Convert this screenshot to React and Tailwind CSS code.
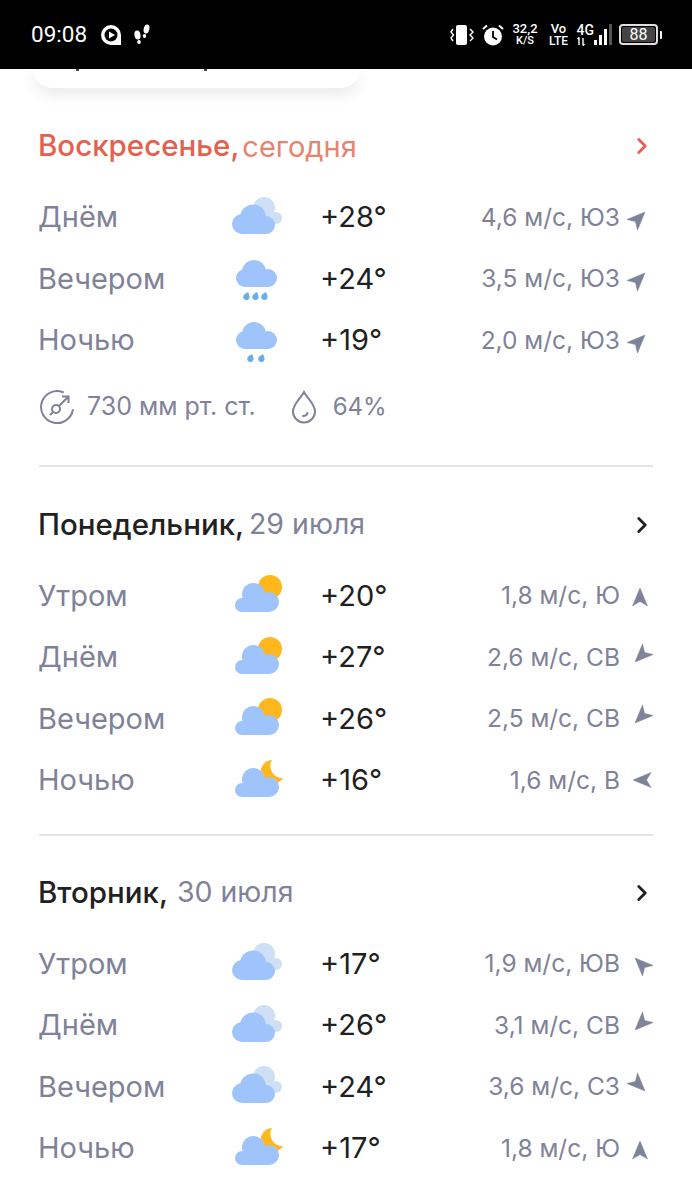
import React from 'react';
import { ChevronRight } from 'lucide-react';

const CLOUD = '#9fc3fb';
const DROP = '#6aaee8';

const PuffyCloud = () => (
  <g fill={CLOUD}>
    <circle cx="13" cy="29" r="10" />
    <circle cx="24" cy="22.5" r="13" />
    <circle cx="37" cy="30" r="9" />
    <rect x="13" y="28" width="24" height="11" />
  </g>
);

const RainCloud = () => (
  <g fill={CLOUD}>
    <circle cx="25" cy="16" r="12" />
    <circle cx="16" cy="22" r="9" />
    <circle cx="39" cy="22" r="9" />
    <rect x="16" y="18" width="23" height="13" />
  </g>
);

const SunCloud = () => (
  <g fill={CLOUD}>
    <circle cx="24.5" cy="21.5" r="11.5" />
    <circle cx="13" cy="32" r="7" />
    <circle cx="40" cy="29" r="10" />
    <rect x="13" y="26" width="27" height="13" />
  </g>
);

const Drop = ({ x, y }) => (
  <path d={`M${x + 2} ${y} C${x + 3} ${y + 3} ${x + 4} ${y + 4} ${x + 3.4} ${y + 6} A3.2 3.2 0 0 1 ${x - 2.8} ${y + 5} C${x - 3} ${y + 3} ${x} ${y + 1} ${x + 2} ${y} Z`} fill={DROP} />
);

const WeatherIcon = ({ type }) => (
  <svg width="56" height="44" viewBox="0 0 56 44" className="shrink-0">
    {type === 'cloudy' && (
      <>
        <g fill="#cfdff5">
          <circle cx="35" cy="13" r="11" />
          <circle cx="47" cy="23" r="6" />
          <rect x="35" y="18" width="12" height="11" />
        </g>
        <PuffyCloud />
      </>
    )}
    {type === 'rain3' && (
      <>
        <RainCloud />
        <Drop x={17} y={36} />
        <Drop x={26} y={36} />
        <Drop x={35} y={36} />
      </>
    )}
    {type === 'rain2' && (
      <>
        <RainCloud />
        <Drop x={21} y={36} />
        <Drop x={32} y={36} />
      </>
    )}
    {type === 'sun' && (
      <>
        <circle cx="41" cy="14" r="12" fill="#ffb71c" />
        <SunCloud />
      </>
    )}
    {type === 'moon' && (
      <>
        <path d="M43 2 A12 12 0 1 0 54 20 A12 12 0 0 1 43 2 Z" fill="#ffb71c" />
        <SunCloud />
      </>
    )}
  </svg>
);

const WindArrow = ({ deg }) => (
  <svg width="24" height="24" viewBox="-12 -12 24 24" className="shrink-0 overflow-visible">
    <path d="M0 -7 L7.5 11 L0 6.5 L-7.5 11 Z" fill="#7d8499" stroke="#7d8499" strokeWidth="0.5" strokeLinejoin="round" transform={`rotate(${deg})`} />
  </svg>
);

const Row = ({ label, icon, temp, wind, deg }) => (
  <div className="flex items-center h-[61.5px]">
    <div className="w-[190px] -ml-[1px] mr-[1px] text-[#7f8298]">{label}</div>
    <WeatherIcon type={icon} />
    <div className="w-[35px] shrink-0" />
    <div className="text-[#212121]">{temp}</div>
    <div className="flex-1 text-right text-[24.5px] text-[#7f8298]">{wind}</div>
    <div className="ml-[8px] mr-[1px] w-[24px] shrink-0 flex"><WindArrow deg={deg} /></div>
  </div>
);

const days = [
  {
    title: 'Понедельник,', sub: '29 июля', gap: 'ml-[5px]',
    rows: [
      ['Утром', 'sun', '+20°', '1,8 м/с, Ю', 0],
      ['Днём', 'sun', '+27°', '2,6 м/с, СВ', 225],
      ['Вечером', 'sun', '+26°', '2,5 м/с, СВ', 225],
      ['Ночью', 'moon', '+16°', '1,6 м/с, В', -90],
    ],
  },
  {
    title: 'Вторник,', sub: '30 июля', gap: 'ml-[9px]',
    rows: [
      ['Утром', 'cloudy', '+17°', '1,9 м/с, ЮВ', -45],
      ['Днём', 'cloudy', '+26°', '3,1 м/с, СВ', 225],
      ['Вечером', 'cloudy', '+24°', '3,6 м/с, СЗ', 135],
      ['Ночью', 'moon', '+17°', '1,8 м/с, Ю', 0],
    ],
  },
];

const today = [
  ['Днём', 'cloudy', '+28°', '4,6 м/с, ЮЗ', 45],
  ['Вечером', 'rain3', '+24°', '3,5 м/с, ЮЗ', 45],
  ['Ночью', 'rain2', '+19°', '2,0 м/с, ЮЗ', 45],
];

const StatusBar = () => (
  <div className="h-[69px] bg-black flex items-center pl-[31px] pr-[30px] text-white font-['Roboto',sans-serif]">
    <span className="text-[22.5px] leading-none">09:08</span>
    <svg width="22" height="22" viewBox="0 0 22 22" className="ml-[13px]">
      <path d="M11 1 A10 10 0 1 0 11 21 H21 V11 A10 10 0 0 0 11 1 Z" fill="#fff" />
      <circle cx="11" cy="11" r="6.5" fill="#000" />
      <path d="M9 7.5 L15 11 L9 14.5 Z" fill="#fff" />
    </svg>
    <svg width="18" height="22" viewBox="0 0 18 22" className="ml-[11px]">
      <g fill="#fff">
        <ellipse cx="4.5" cy="11" rx="3" ry="4.5" transform="rotate(-10 4.5 11)" />
        <ellipse cx="6" cy="18" rx="1.8" ry="2" />
        <ellipse cx="13.5" cy="5" rx="2.8" ry="4.5" transform="rotate(12 13.5 5)" />
        <ellipse cx="11.5" cy="12" rx="1.7" ry="2" />
      </g>
    </svg>
    <div className="flex-1" />
    <svg width="24" height="20" viewBox="0 0 24 20">
      <rect x="6" y="0" width="11" height="20" rx="2" fill="#fff" />
      <path d="M3 4 L1 7 L3.5 10 L1 13 L3 16" stroke="#fff" strokeWidth="1.4" fill="none" />
      <path d="M20 4 L23 7 L20 10 L23 13 L20 16" stroke="#fff" strokeWidth="1.4" fill="none" />
    </svg>
    <svg width="22" height="22" viewBox="0 0 22 22" className="ml-[8px]">
      <circle cx="11" cy="12.5" r="9" fill="#fff" />
      <path d="M11 7 V13 L15 15.5" stroke="#000" strokeWidth="1.8" fill="none" />
      <path d="M1 5 L5 1.5 M21 5 L17 1.5" stroke="#fff" strokeWidth="2" />
    </svg>
    <div className="ml-[8px] w-[27px] flex flex-col items-center font-medium">
      <span className="text-[13px] leading-[13px]">32,2</span>
      <span className="text-[11px] leading-[12px]">K/S</span>
    </div>
    <div className="ml-[10px] w-[20px] flex flex-col items-center font-medium">
      <span className="text-[13px] leading-[13px]">Vo</span>
      <span className="text-[12px] leading-[12px]">LTE</span>
    </div>
    <div className="ml-[8px] flex flex-col font-medium">
      <span className="text-[14px] leading-[14px]">4G</span>
      <svg width="16" height="9" viewBox="0 0 16 9">
        <path d="M2 0.5 V8 M0.5 2 L2 0.5 M6 8.5 V1 M6 8.5 L7.5 7" stroke="#fff" strokeWidth="1.4" fill="none" />
      </svg>
    </div>
    <svg width="18" height="22" viewBox="0 0 18 22">
      <g fill="#fff">
        <rect x="0" y="16" width="3" height="5" />
        <rect x="5" y="11" width="3" height="10" />
        <rect x="10" y="5" width="3" height="16" />
      </g>
      <rect x="15" y="0" width="3" height="21" fill="#555" />
    </svg>
    <div className="ml-[7px] w-[39px] h-[21px] rounded-[4px] border-2 border-[#e0e0e0] p-[1px] flex">
      <div className="flex-1 bg-[#444] rounded-[2px] flex items-center justify-center text-[16px] leading-none">88</div>
    </div>
    <div className="ml-[2px] w-[2px] h-[8px] bg-white rounded-r-[1px]" />
  </div>
);

const Heading = ({ title, sub, gap, today: isToday }) => (
  <div className="flex items-center h-[40px]">
    <span className={`-ml-[1px] font-medium text-[29.5px] ${isToday ? 'text-[#e5604d]' : 'text-[#212121]'}`}>{title}</span>
    <span className={`${gap} flex-1 ${isToday ? 'text-[29px] text-[#e8836f]' : 'text-[28.5px] text-[#7f8298]'}`}>{sub}</span>
    <ChevronRight size={26} strokeWidth={2.6} className={`mr-[-2px] ${isToday ? 'text-[#e5604d]' : 'text-[#212121]'}`} />
  </div>
);

export default function App() {
  return (
    <div className="w-[692px] h-[1200px] overflow-hidden bg-white font-['Inter',sans-serif] text-[29px] leading-none">
      <StatusBar />
      <div className="h-[19px] ml-[33px] w-[327px] bg-white rounded-b-[24px] shadow-[0_6px_16px_rgba(0,0,0,0.09)] flex items-start">
        <div className="ml-[43px] w-[3px] h-[2px] bg-[#444]" />
        <div className="ml-[125px] w-[3px] h-[2px] bg-[#444]" />
      </div>

      <div className="px-[39px]">
        <div className="mt-[38px]">
          <Heading title="Воскресенье," sub="сегодня" gap="ml-[3px]" today />
        </div>
        <div className="mt-[20px]">
          {today.map(r => (
            <Row key={r[0]} label={r[0]} icon={r[1]} temp={r[2]} wind={r[3]} deg={r[4]} />
          ))}
        </div>
        <div className="mt-[16px] h-[40px] flex items-center text-[25px] text-[#7f8298]">
          <svg width="36" height="36" viewBox="0 0 36 36" fill="none" stroke="#7f8298" strokeWidth="2">
            <path d="M24 3.2 A16 16 0 1 0 33.8 21" strokeLinecap="round" />
            <circle cx="17" cy="20" r="4" />
            <path d="M20 17 L29 8 M23 7.5 H29.5 V14" />
            <path d="M11 26 L14 23" />
          </svg>
          <span className="ml-[12px]">730 мм рт. ст.</span>
          <svg width="28" height="34" viewBox="0 0 28 34" fill="none" stroke="#7f8298" strokeWidth="2" className="ml-[34px]">
            <path d="M14 2 C11 8 3 14 3 21.5 A11 11 0 0 0 25 21.5 C25 14 17 8 14 2 Z" />
            <path d="M13 26 C15 26 17 25 17.5 23" strokeLinecap="round" />
          </svg>
          <span className="ml-[15px] text-[24px]">64%</span>
        </div>

        {days.map((d, i) => (
          <div key={d.title} className={i === 0 ? 'mt-[38px] border-t-2 border-[#e5e5e5]' : 'mt-[23px] border-t-2 border-[#e5e5e5]'}>
            <div className={i === 0 ? 'mt-[38px]' : 'mt-[37px]'}>
              <Heading title={d.title} sub={d.sub} gap={d.gap} />
            </div>
            <div className="mt-[20px]">
              {d.rows.map(r => (
                <Row key={r[0]} label={r[0]} icon={r[1]} temp={r[2]} wind={r[3]} deg={r[4]} />
              ))}
            </div>
          </div>
        ))}
      </div>
    </div>
  );
}
